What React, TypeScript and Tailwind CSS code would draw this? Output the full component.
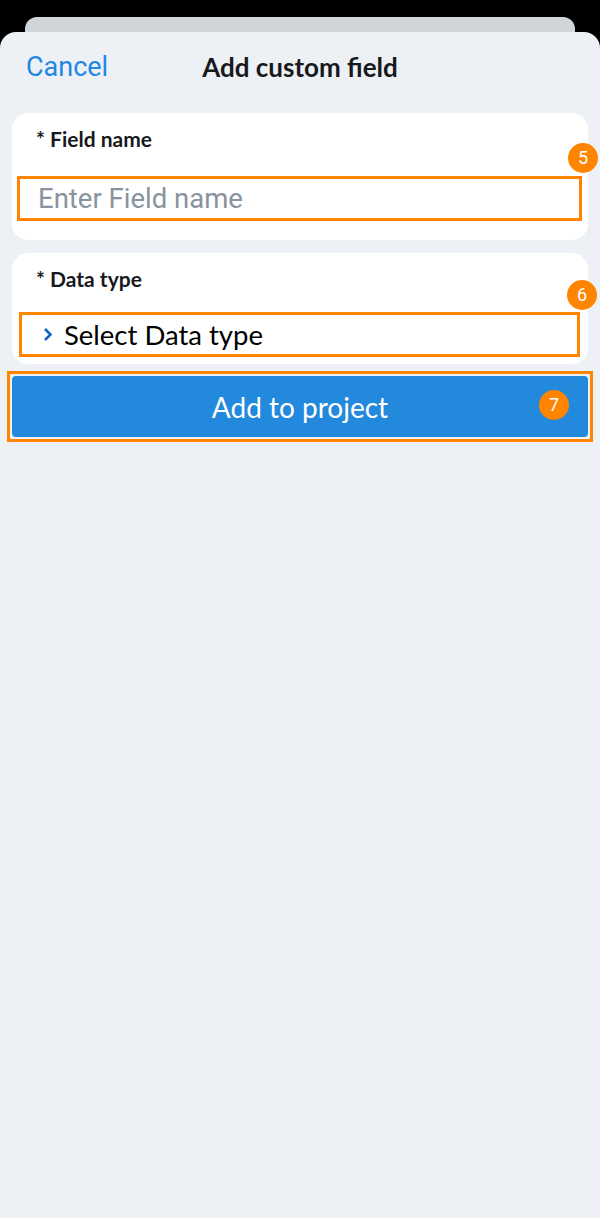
const Badge = ({ n, className }: { n: string; className: string }) => (
  <span
    className={`absolute flex h-[30px] w-[30px] items-center justify-center rounded-full bg-[#ff8400] text-[18px] leading-none text-white font-['Roboto',sans-serif] ${className}`}
  >
    {n}
  </span>
);

export default function App() {
  return (
    <div className="flex min-h-[1218px] flex-col bg-black font-['Lato',sans-serif]">
      <div className="mx-[25px] mt-[17px] h-[15px] rounded-t-[12px] bg-[#d0d5d9]" />
      <div className="flex flex-1 flex-col rounded-t-[16px] bg-[#edf1f5] px-3">
        <header className="grid h-[70px] grid-cols-[1fr_auto_1fr] items-center">
          <button className="justify-self-start pl-[14px] text-[27px] text-[#1e88e5] font-['Roboto',sans-serif]">
            Cancel
          </button>
          <h1 className="text-[26px] font-bold text-[#17191c]">Add custom field</h1>
          <span />
        </header>

        <section className="relative mt-[11px] rounded-[16px] bg-white pb-[19px] pt-[14px]">
          <p className="pl-6 text-[21px] font-bold leading-[24px] text-[#17191c]">* Field name</p>
          <Badge n="5" className="left-[556px] top-[30px]" />
          <div className="ml-[5px] mr-[6px] mt-[25px] flex h-[45px] items-center border-[3px] border-[#ff8400] pl-[18px]">
            <span className="text-[27.5px] text-[#8893a0] font-['Roboto',sans-serif]">Enter Field name</span>
          </div>
        </section>

        <section className="relative mt-[13px] rounded-[16px] bg-white pb-[7px] pt-[14px]">
          <p className="pl-6 text-[21px] font-bold leading-[24px] text-[#17191c]">* Data type</p>
          <Badge n="6" className="left-[555px] top-[27px]" />
          <div className="ml-[7px] mr-[8px] mt-[21px] flex h-[45px] items-center gap-[11px] border-[3px] border-[#ff8400] pl-[21px]">
            <svg width="10" height="15" viewBox="0 0 10 15" fill="none">
              <path d="M2 2l5.5 5.5L2 13" stroke="#1565c0" strokeWidth="2.6" />
            </svg>
            <span className="text-[27.5px] text-black">Select Data type</span>
          </div>
        </section>

        <div className="relative -mx-[5px] mt-[7px] border-[3px] border-[#ff8400] p-[2px]">
          <button className="flex h-[61px] w-full items-center justify-center rounded-[4px] bg-[#2389dd] text-[28px] text-white">
            Add to project
          </button>
          <Badge n="7" className="left-[529px] top-[16px]" />
        </div>
      </div>
    </div>
  );
}
